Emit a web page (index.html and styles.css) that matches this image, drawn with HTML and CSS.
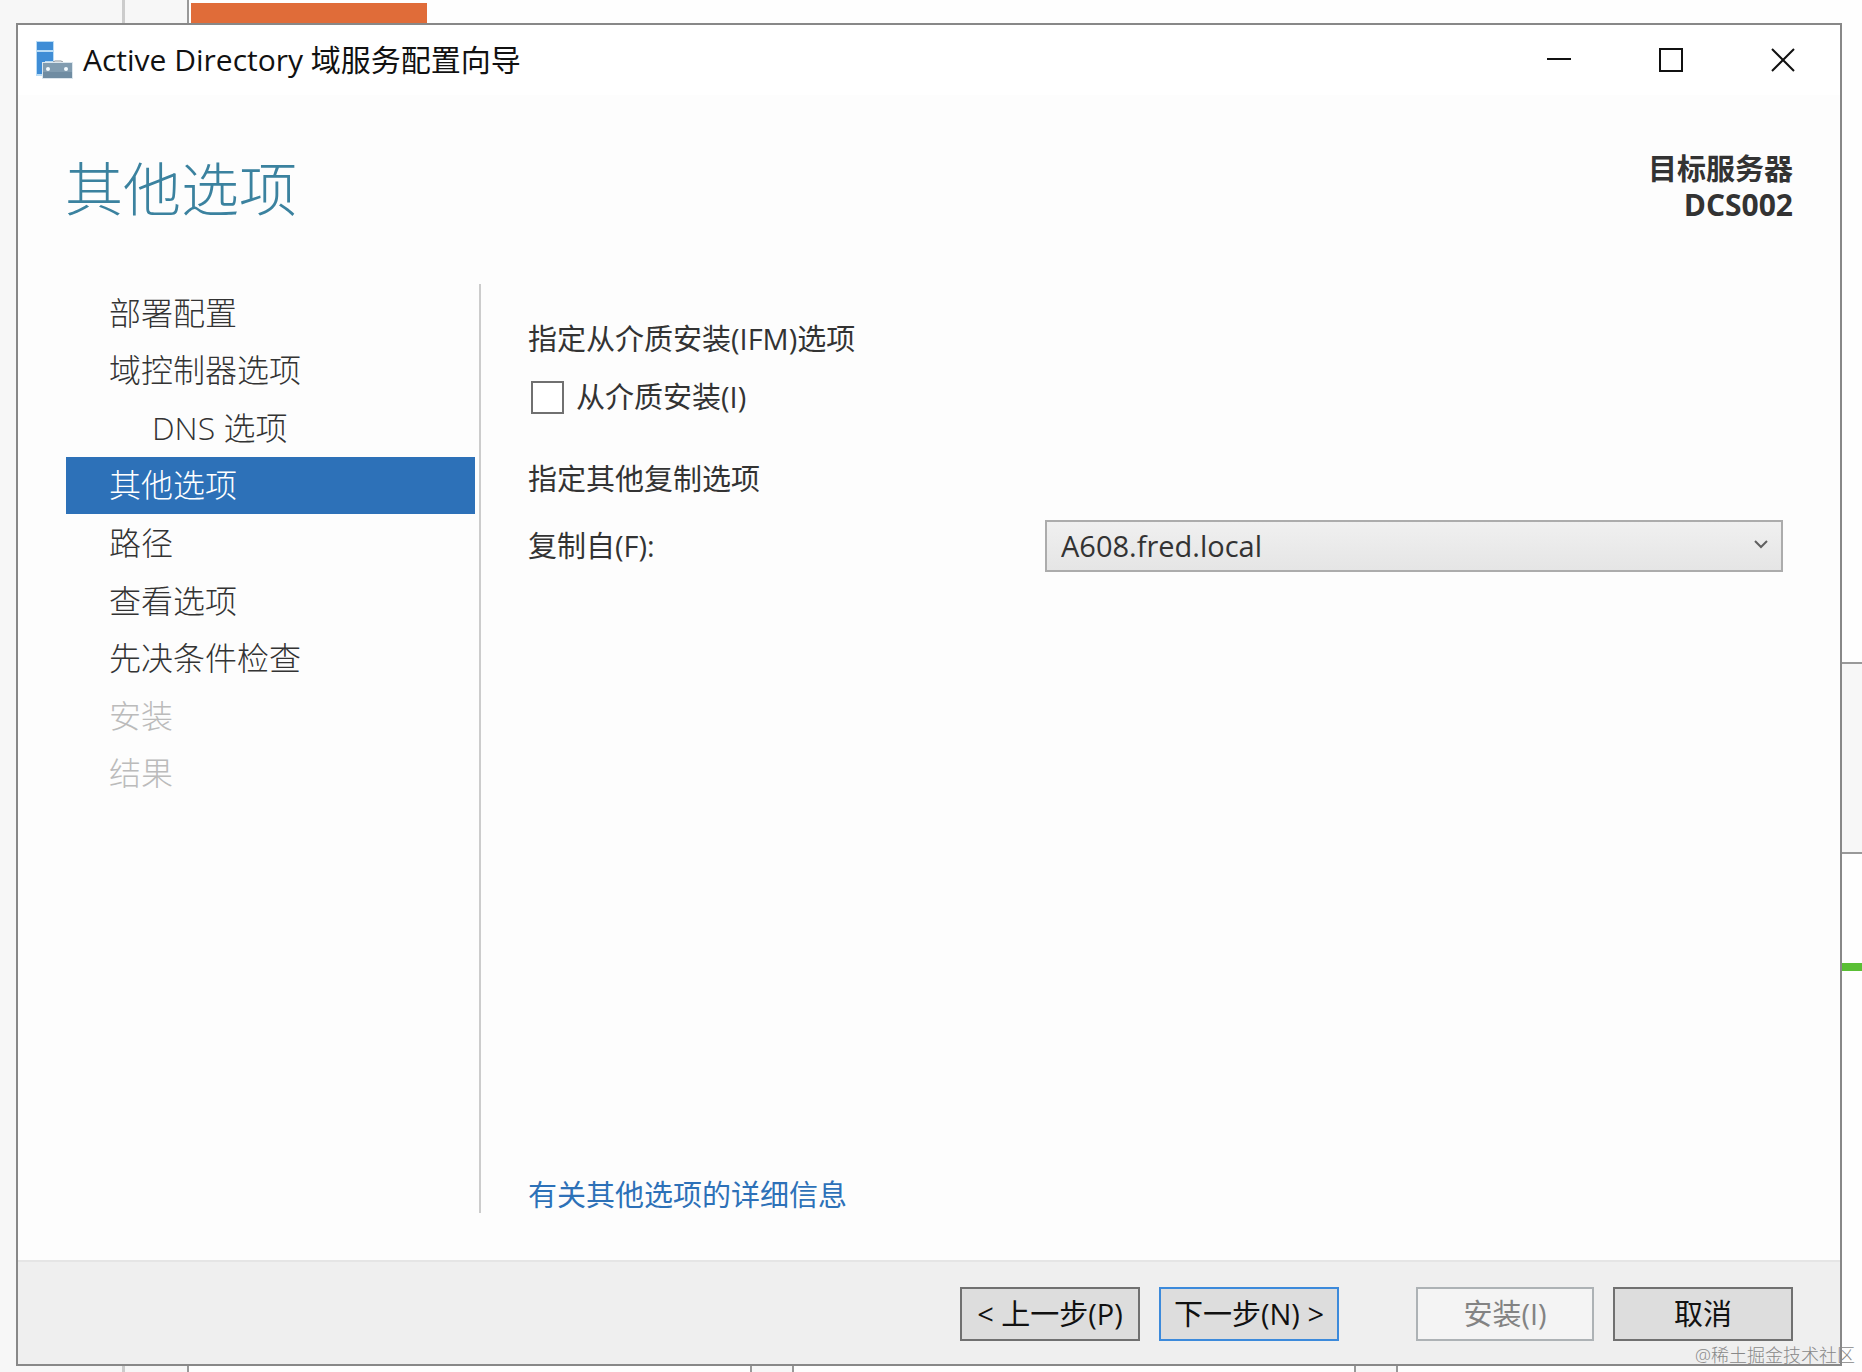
FILE: index.html
```html
<!DOCTYPE html>
<html lang="zh-CN">
<head>
<meta charset="utf-8">
<meta name="viewport" content="width=device-width, initial-scale=1">
<title>Active Directory 域服务配置向导</title>
<link rel="stylesheet" href="styles.css">
</head>
<body>
<div class="desktop">
  <div class="backdrop" aria-hidden="true">
    <div class="pane pane-left"></div>
    <div class="pane pane-gutter"></div>
    <div class="banner"></div>
    <div class="column column-first"></div>
    <div class="column column-second"></div>
    <div class="side-card"></div>
    <div class="side-bar"></div>
  </div>

  <div class="window">
    <header class="titlebar">
      <svg class="app-icon" width="38" height="40" viewBox="0 0 38 40" aria-hidden="true">
        <path fill="#b9dcf6" d="M1 1h18v22h-12v13H1z"/>
        <path fill="#3f8dd6" d="M2 2h16v8H2zM2 12h16v9h-8v13H2z"/>
        <path fill="none" stroke="#8a9299" stroke-width="1" d="M18 22l2-1h6l2 1"/>
        <path fill="#dce6ed" d="M7 22h31v17H7z"/>
        <path fill="#819cb0" d="M8 23h29v15H8z"/>
        <path fill="#6f8ca2" d="M8 32h29v6H8z"/>
        <circle cx="13" cy="29" r="2" fill="#f4fbff"/>
        <circle cx="31" cy="29" r="2" fill="#f4fbff"/>
      </svg>
      <span class="caption">Active Directory 域服务配置向导</span>
      <div class="window-controls">
        <button class="control" type="button" aria-label="最小化"><svg width="24" height="24" viewBox="0 0 24 24"><path d="M0 11h24"/></svg></button>
        <button class="control" type="button" aria-label="最大化"><svg width="24" height="24" viewBox="0 0 24 24"><path d="M1 1h22v22H1z"/></svg></button>
        <button class="control" type="button" aria-label="关闭"><svg width="24" height="24" viewBox="0 0 24 24"><path d="M1 1l22 22M23 1L1 23"/></svg></button>
      </div>
    </header>

    <div class="page-head">
      <h1 class="page-title">其他选项</h1>
      <div class="target">
        <div>目标服务器</div>
        <div class="target-name">DCS002</div>
      </div>
    </div>

    <main class="body">
      <nav class="steps">
        <ol class="step-list">
          <li class="step">部署配置</li>
          <li class="step">域控制器选项</li>
          <li class="step step-sub">DNS 选项</li>
          <li class="step step-current" aria-current="step">其他选项</li>
          <li class="step">路径</li>
          <li class="step">查看选项</li>
          <li class="step">先决条件检查</li>
          <li class="step step-disabled">安装</li>
          <li class="step step-disabled">结果</li>
        </ol>
      </nav>
      <form class="content" id="options">
        <p class="section">指定从介质安装(IFM)选项</p>
        <label class="check"><input class="box" type="checkbox">从介质安装(I)</label>
        <p class="section section-replica">指定其他复制选项</p>
        <div class="field">
          <label for="source">复制自(F):</label>
          <div class="select-wrap">
            <select class="select" id="source"><option>A608.fred.local</option></select>
            <svg class="chevron" width="16" height="10" viewBox="0 0 16 10" aria-hidden="true"><path d="M2 1l6 6 6-6"/></svg>
          </div>
        </div>
        <a class="more" href="#more">有关其他选项的详细信息</a>
      </form>
    </main>

    <footer class="actions">
      <button class="btn" type="button">&lt; 上一步(P)</button>
      <button class="btn btn-default" type="button">下一步(N) &gt;</button>
      <button class="btn btn-install" type="button" disabled>安装(I)</button>
      <button class="btn" type="button">取消</button>
    </footer>
  </div>
  <div class="watermark">@稀土掘金技术社区</div>
</div>
</body>
</html>
```
FILE: styles.css
```css
* {
  box-sizing: border-box;
}

body {
  margin: 0;
  font-family: "Open Sans", "Noto Sans CJK SC", sans-serif;
  font-size: 29px;
  line-height: 36px;
  color: #333;
  background: #fefefe;
}

button,
select {
  font: inherit;
  color: inherit;
}

.desktop {
  position: relative;
  display: flex;
  min-height: 100vh;
  padding: 23px 20px 6px 16px;
  overflow: hidden;
}

/* What shows around the edges of the wizard */
.backdrop > div {
  position: absolute;
}

.pane {
  top: 0;
  bottom: 0;
  background: #f7f7f7;
}

.pane-left {
  left: 0;
  width: 125px;
  border-right: 3px solid #ccc;
}

.pane-gutter {
  left: 125px;
  width: 64px;
  border-right: 2px solid #999;
}

.banner {
  top: 3px;
  left: 191px;
  width: 236px;
  height: 24px;
  background: #e06c39;
}

.column {
  bottom: 0;
  width: 44px;
  height: 20px;
  border: solid #999;
  border-width: 0 2px;
  background: #f7f7f7;
}

.column-first {
  left: 750px;
}

.column-second {
  left: 1354px;
}

.side-card {
  top: 662px;
  right: 0;
  width: 40px;
  height: 192px;
  border: solid #999;
  border-width: 2px 0;
  background: #f7f7f7;
}

.side-bar {
  top: 963px;
  right: 0;
  width: 40px;
  height: 8px;
  background: #5abf35;
}

/* Wizard window */
.window {
  position: relative;
  display: flex;
  flex: 1;
  flex-direction: column;
  min-width: 0;
  border: 2px solid #888;
  background: #fdfdfd;
}

.titlebar {
  display: flex;
  align-items: center;
  height: 70px;
  padding: 0 45px 0 17px;
  background: #fff;
  color: #111;
}

.app-icon {
  flex: none;
  margin-right: 10px;
}

.caption {
  font-size: 30px;
  white-space: nowrap;
}

.window-controls {
  display: flex;
  gap: 88px;
  margin-left: auto;
}

.control {
  display: flex;
  padding: 0;
  border: 0;
  background: none;
}

.control path {
  fill: none;
  stroke: #111;
  stroke-width: 2;
}

.page-head {
  display: flex;
  justify-content: space-between;
  padding: 56px 47px 0;
}

.page-title {
  margin: 0;
  font-size: 58px;
  font-weight: 300;
  line-height: 76px;
  color: #3b829f;
}

.target {
  font-weight: 700;
  text-align: right;
}

.target-name {
  font-size: 30px;
}

.body {
  display: flex;
  flex: 1;
  padding: 57px 57px 47px 48px;
}

.steps {
  flex: none;
  width: 415px;
  padding-right: 4px;
  border-right: 2px solid #ccc;
}

.step-list {
  display: grid;
  grid-auto-rows: 1fr;
  min-height: 518px;
  margin: 0;
  padding: 0;
  list-style: none;
  font-size: 32px;
  font-weight: 300;
}

.step {
  display: flex;
  align-items: center;
  padding-left: 43px;
}

.step-sub {
  padding-left: 86px;
}

.step-current {
  background: #2d71b8;
  color: #fff;
}

.step-disabled {
  color: #bbb;
}

.content {
  display: flex;
  flex: 1;
  flex-direction: column;
  align-items: flex-start;
  min-width: 0;
  padding: 37px 0 0 47px;
}

.section {
  margin: 0;
}

.section-replica {
  margin-top: 46px;
}

.check {
  display: flex;
  align-items: center;
  gap: 12px;
  margin-top: 22px;
  padding-left: 3px;
}

.box {
  appearance: none;
  width: 33px;
  height: 33px;
  margin: 0;
  border: 2px solid #707070;
  background: #fff;
}

.field {
  display: flex;
  align-items: center;
  justify-content: space-between;
  align-self: stretch;
  margin-top: 23px;
}

.select-wrap {
  position: relative;
  flex: 0 1 738px;
}

.select {
  appearance: none;
  display: block;
  width: 100%;
  height: 52px;
  padding: 0 14px;
  border: 2px solid #acacac;
  border-radius: 0;
  background: linear-gradient(#f0f0f0, #e5e5e5);
}

.chevron {
  position: absolute;
  top: 20px;
  right: 14px;
  pointer-events: none;
}

.chevron path {
  fill: none;
  stroke: #606060;
  stroke-width: 2;
}

.more {
  margin-top: auto;
  color: #2d71b8;
  text-decoration: none;
}

.actions {
  display: flex;
  align-items: center;
  justify-content: flex-end;
  gap: 19px;
  height: 104px;
  padding: 2px 47px 0;
  border-top: 2px solid #e5e5e5;
  background: #efefef;
}

.btn {
  width: 180px;
  height: 54px;
  padding: 0;
  border: 2px solid #707070;
  background: #ddd;
  color: #111;
  white-space: nowrap;
}

.btn-default {
  border-color: #3c8adb;
}

.btn-install {
  width: 178px;
  margin-left: 58px;
  border-color: #adb2b5;
  background: #f4f4f4;
  color: #838383;
}

.watermark {
  position: absolute;
  right: 7px;
  bottom: 5px;
  font-size: 18px;
  font-weight: 300;
  line-height: 24px;
  color: #888;
}
```
